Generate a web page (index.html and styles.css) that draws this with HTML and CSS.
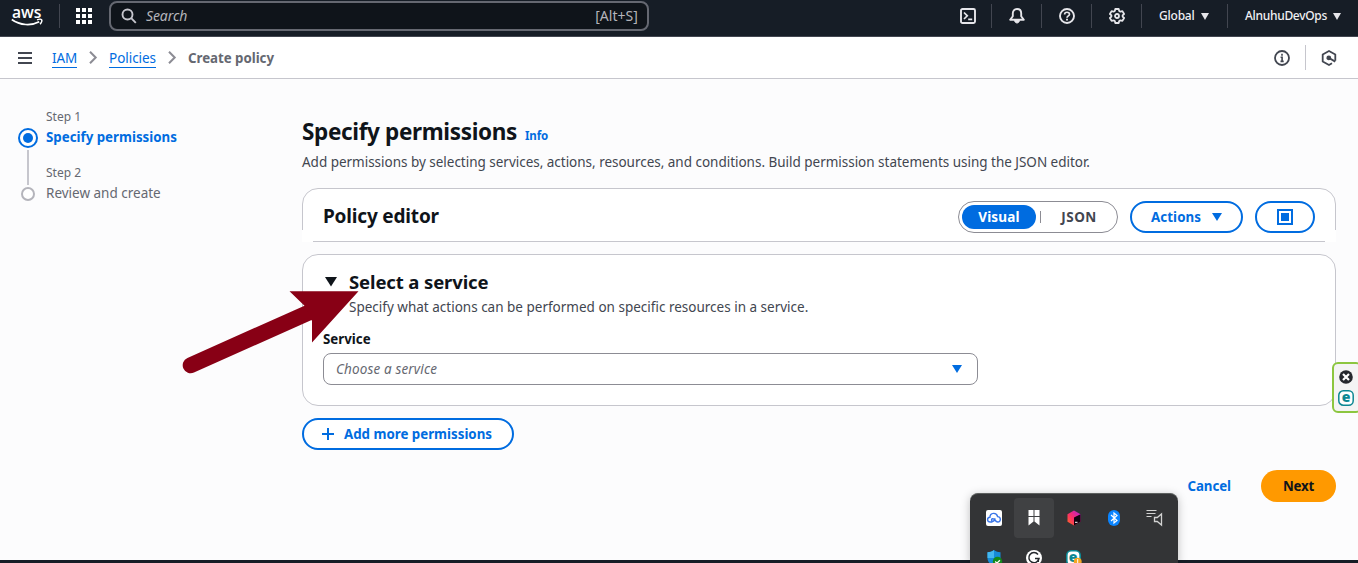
FILE: index.html
```html
<!DOCTYPE html>
<html lang="en">
<head>
<meta charset="utf-8">
<title>Create policy | IAM | Global</title>
<link rel="stylesheet" href="styles.css">
</head>
<body>
<header class="topnav">
  <div class="logo-cell">
    <svg class="logo" width="34" height="24" viewBox="0 0 34 24"><text class="logo-text" x="1" y="13.500" textLength="29.5" lengthAdjust="spacingAndGlyphs">aws</text><path d="M.8 15.5C9 21.6 20.500 22 28.200 17.800" fill="none" stroke="#fff" stroke-width="1.700"/><path d="M26 15.900c1.800-.7 4-.8 4.600-.2.500.7-.2 3-1.500 4.500" fill="none" stroke="#fff" stroke-width="1.400"/></svg>
  </div>
  <div class="apps-cell">
    <svg width="16" height="16" viewBox="0 0 16 16" fill="#fff"><path d="M0 0h4v4H0zM6 0h4v4H6zM12 0h4v4h-4zM0 6h4v4H0zM6 6h4v4H6zM12 6h4v4h-4zM0 12h4v4H0zM6 12h4v4H6zM12 12h4v4h-4z"/></svg>
  </div>
  <div class="search">
    <svg width="16" height="16" viewBox="0 0 16 16" fill="none" stroke="#c6c6cd" stroke-width="1.900"><circle cx="6.500" cy="6.500" r="5"/><path d="m10.200 10.200 4.600 4.600"/></svg>
    <span class="search-hint">Search</span>
    <span class="search-key">[Alt+S]</span>
  </div>
  <div class="tools">
    <div class="tool terminal"><svg width="16" height="16" viewBox="0 0 16 16" fill="none" stroke="#e6e6ea" stroke-width="1.900"><rect x="1" y="1" width="14" height="14" rx="1.500"/><path d="m4 4.500 3.300 3.300L4 11M8.200 11.300h4" stroke-width="1.700"/></svg></div>
    <div class="tool ruled"><svg width="16" height="16" viewBox="0 0 16 16" fill="none" stroke="#e6e6ea" stroke-width="1.900" stroke-linejoin="round"><path d="M8 1C5.200 1 3.800 3 3.800 5.300v2.900L1.200 11.700h13.600l-2.600-3.500V5.300C12.200 3 10.800 1 8 1z"/><path d="M5.500 12.500c.4 3.300 4.600 3.300 5 0z" fill="#e6e6ea" stroke-width="1"/></svg></div>
    <div class="tool ruled"><svg width="16" height="16" viewBox="0 0 16 16" fill="none" stroke="#e6e6ea" stroke-width="1.900"><circle cx="8" cy="8" r="7"/><path d="M5.600 6.400C5.600 3.500 10.500 3.600 10.500 6.200c0 1.600-2.500 1.700-2.500 3.500" stroke-width="1.700"/><path d="M8 10.800v1.800"/></svg></div>
    <div class="tool ruled"><svg width="16" height="16" viewBox="0 0 16 16" fill="none" stroke="#e6e6ea" stroke-width="1.800" stroke-linejoin="round"><path d="M6.300 1h3.400l.5 2 1.200.7 2-.6 1.700 2.900L13.600 7.400v1.200l1.500 1.400-1.700 2.900-2-.6-1.200.7-.5 2H6.300l-.5-2-1.200-.7-2 .6L.9 10l1.500-1.400V7.400L.9 6l1.700-2.900 2 .6L5.800 3z"/><circle cx="8" cy="8" r="2"/></svg></div>
    <div class="tool ruled region"><span class="region-name">Global</span><svg class="caret" width="8" height="7" viewBox="0 0 8 7"><path d="M0 0h8L4 7z" fill="#e6e6ea"/></svg></div>
    <div class="tool ruled account"><span class="account-name">AlnuhuDevOps</span><svg class="caret" width="8" height="7" viewBox="0 0 8 7"><path d="M0 0h8L4 7z" fill="#e6e6ea"/></svg></div>
  </div>
</header>

<nav class="crumbs">
  <svg class="menu" width="14" height="12" viewBox="0 0 14 12" fill="#424650"><path d="M0 0h14v2H0zM0 5h14v2H0zM0 10h14v2H0z"/></svg>
  <a class="crumb crumb-iam">IAM</a>
  <svg class="chev" width="8" height="13" viewBox="0 0 8 13" fill="none" stroke="#8c8c94" stroke-width="2"><path d="m1 .7 5.700 5.800L1 12.300"/></svg>
  <a class="crumb crumb-policies">Policies</a>
  <svg class="chev" width="8" height="13" viewBox="0 0 8 13" fill="none" stroke="#8c8c94" stroke-width="2"><path d="m1 .7 5.700 5.800L1 12.300"/></svg>
  <span class="crumb-current">Create policy</span>
  <div class="crumb-tools">
    <svg width="16" height="16" viewBox="0 0 16 16" fill="none" stroke="#424650" stroke-width="1.800"><circle cx="8" cy="8" r="7"/><path d="M8 3.800v1.900M6.600 7.300h1.500v4.300M6.500 11.400h3.200" stroke-width="1.600"/></svg>
    <i class="rule"></i>
    <svg width="16" height="16" viewBox="0 0 16 16" fill="none" stroke="#424650" stroke-width="1.800" stroke-linejoin="round"><path d="M14.300 10.800V4.500L8 1 1.700 4.500v7L8 15l3-1.700"/><path d="m8 8 6.300 3.700" stroke-width="2"/><circle cx="7.800" cy="7.900" r="1.500" fill="#424650"/></svg>
  </div>
</nav>

<div class="layout">
  <aside class="steps">
    <div class="rail">
      <svg width="20" height="20" viewBox="0 0 20 20"><circle cx="10" cy="10" r="9" fill="#fff" stroke="#006ce0" stroke-width="2"/><circle cx="10" cy="10" r="5" fill="#006ce0"/></svg>
      <i class="rail-line"></i>
      <svg width="14" height="14" viewBox="0 0 14 14"><circle cx="7" cy="7" r="6" fill="#fff" stroke="#b4b4bb" stroke-width="2"/></svg>
    </div>
    <div class="step-list">
      <div class="step"><div class="step-no">Step 1</div><div class="step-name active">Specify permissions</div></div>
      <div class="step"><div class="step-no">Step 2</div><div class="step-name">Review and create</div></div>
    </div>
  </aside>

  <main class="content">
    <div class="title-row"><h1 class="title">Specify permissions</h1><a class="info">Info</a></div>
    <p class="lead">Add permissions by selecting services, actions, resources, and conditions. Build permission statements using the JSON editor.</p>

    <section class="editor">
      <h2 class="editor-title">Policy editor</h2>
      <div class="segmented"><span class="segment selected">Visual</span><i class="segment-rule"></i><span class="segment json">JSON</span></div>
      <button class="button actions"><span class="actions-label">Actions</span><svg width="10" height="8" viewBox="0 0 10 8"><path d="M0 0h10L5 8z" fill="#006ce0"/></svg></button>
      <button class="button panel-button"><svg width="16" height="16" viewBox="0 0 16 16"><path d="M1 1h14v14H1z" fill="none" stroke="#006ce0" stroke-width="2"/><path d="M4 4h8v8H4z" fill="#006ce0"/></svg></button>
    </section>

    <section class="service">
      <div class="service-head">
        <svg width="12" height="10" viewBox="0 0 12 10"><path d="M0 0h12L6 9.500z" fill="#0f141a"/></svg>
        <h2 class="service-title">Select a service</h2>
      </div>
      <p class="service-lead">Specify what actions can be performed on specific resources in a service.</p>
      <div class="field-label">Service</div>
      <div class="select"><span class="placeholder">Choose a service</span><svg width="10" height="8" viewBox="0 0 10 8"><path d="M0 0h10L5 8z" fill="#006ce0"/></svg></div>
    </section>

    <button class="button add"><svg width="12" height="12" viewBox="0 0 12 12"><path d="M6 0v12M0 6h12" stroke="#006ce0" stroke-width="2"/></svg><span class="add-label">Add more permissions</span></button>

    <div class="footer-actions"><a class="cancel">Cancel</a><button class="next"><span>Next</span></button></div>
  </main>
</div>
<footer class="bottom-bar"></footer>

<svg class="arrow" width="180" height="90" viewBox="0 0 180 90"><path d="M10.700 75.200 130 22" stroke="#880015" stroke-width="16" stroke-linecap="round"/><path d="M109.500 1.200H178.500L132 52.500V31L124.500 15.800z" fill="#880015"/></svg>

<div class="dock">
  <svg width="14" height="14" viewBox="0 0 14 14"><circle cx="7" cy="7" r="6.800" fill="#25282d"/><path d="m4 4 6 6M10 4l-6 6" stroke="#fff" stroke-width="2.200"/></svg>
  <svg width="16" height="16" viewBox="0 0 16 16"><rect x=".8" y=".8" width="14.400" height="14.400" rx="4.500" fill="#fff" stroke="#0b8793" stroke-width="1.500"/><text class="eset" x="8" y="12">e</text></svg>
</div>

<div class="tray">
  <div class="tray-cell"><svg width="16" height="16" viewBox="0 0 16 16"><rect width="16" height="16" rx="2" fill="#fff"/><path d="M6.500 12H4.300C.8 12 .7 7.500 3.900 7.300 4 2.500 10.500 2 11.600 6.600c3.600.1 3.700 5.400.1 5.400-2.600 0-2.800-3.500-5-3.200-1.700.2-1.600 2.400 0 2.500 1.500.1 1.700-1.700 2.700-2.700" fill="none" stroke="#3975e8" stroke-width="1.400"/></svg></div>
  <div class="tray-cell hovered"><svg width="12" height="16" viewBox="0 0 12 16" fill="#fff"><path d="M.5 0h5v6h-5zM6.500 0h5v6h-5zM.5 7h5v4.500l-5 4zM6.500 7h5v8.500l-5-4z"/></svg></div>
  <div class="tray-cell"><svg width="16" height="16" viewBox="0 0 16 16"><defs><linearGradient id="cube" x1="0" y1="1" x2="1" y2="0"><stop offset="0" stop-color="#ff6b20"/><stop offset=".45" stop-color="#fa2d69"/><stop offset="1" stop-color="#b51fd6"/></linearGradient></defs><path d="m8 .5 6.500 3.700v7.600L8 15.500l-6.500-3.700V4.200z" fill="url(#cube)"/><path d="m8 7.500 6.500-3.300v7.600L8 15.500z" fill="#12020f"/><path d="M9 12.300h2.500" stroke="#fff"/></svg></div>
  <div class="tray-cell"><svg width="12" height="16" viewBox="0 0 12 16"><rect width="12" height="16" rx="6" fill="#0a84ff"/><path d="m3 5 6 5.500L6 13V3l3 2.500L3 11" fill="none" stroke="#fff" stroke-width="1.200"/></svg></div>
  <div class="tray-cell"><svg width="17" height="16" viewBox="0 0 17 16" fill="none" stroke="#d2d2d2"><path d="M.5 .5h10M.5 3.500h9M.5 6.500h5"/><path d="M8.500 7.500h2.800l4.200-3.500v11l-4.200-3.500H8.500z" stroke-width="1.300"/></svg></div>
  <div class="tray-cell"><svg width="16" height="16" viewBox="0 0 16 16"><path d="M8 0c2 1.600 4 2.200 6.500 2.200V8c0 4-3 6.500-6.500 8-3.500-1.500-6.500-4-6.500-8V2.200C4 2.200 6 1.600 8 0z" fill="#168bd8"/><path d="M8 0v8H1.500V2.200C4 2.200 6 1.600 8 0z" fill="#43b7f0"/><circle cx="11.500" cy="11.500" r="4.700" fill="#138a1a"/><path d="m9.200 11.500 1.700 1.700 3-3" stroke="#fff" stroke-width="1.300" fill="none"/></svg></div>
  <div class="tray-cell"><svg width="16" height="16" viewBox="0 0 16 16"><circle cx="8" cy="8" r="8" fill="#fff"/><path d="M12 4.500A5.100 5.100 0 1 0 13 8.500H9M12.300 8.500v3.500" fill="none" stroke="#25282d" stroke-width="1.500"/></svg></div>
  <div class="tray-cell"><svg width="16" height="16" viewBox="0 0 16 16"><rect x=".8" y=".8" width="13.400" height="14.400" rx="4.500" fill="#fff" stroke="#0b8793" stroke-width="1.600"/><text class="eset" x="7" y="11.500">e</text><circle cx="11.700" cy="11.700" r="4" fill="#f5a623"/><path d="M11.700 9v5" stroke="#fff"/></svg></div>
</div>
</body>
</html>
```
FILE: styles.css
```css
* { box-sizing: border-box; }
body {
  margin: 0;
  height: 563px;
  overflow: hidden;
  display: flex;
  flex-direction: column;
  background: #fcfcfd;
  color: #0f141a;
  font: 13.5px/20px "Noto Sans", "Open Sans", sans-serif;
}
h1, h2, p { margin: 0; }
svg { display: block; flex: none; overflow: visible; }
button { font: inherit; cursor: pointer; }

.topnav {
  flex: none;
  display: flex;
  height: 37px;
  background: #161d26;
  border-bottom: 1px solid #424650;
  padding-bottom: 4px;
  align-items: center;
}
.logo-cell { width: 60px; height: 24px; padding-left: 11px; border-right: 1px solid #424650; }
.logo-text { font: 600 17px "Open Sans", sans-serif; fill: #fff; }
.apps-cell { width: 49px; padding-left: 16px; }
.search {
  display: flex;
  align-items: center;
  width: 540px;
  height: 30px;
  margin-top: -1px;
  padding: 0 9px 0 10px;
  border: 2px solid #656871;
  border-radius: 8px;
  background: #0f141a;
  color: #b4b4bb;
  font-size: 14px;
}
.search-hint { margin-left: 9px; font-style: italic; letter-spacing: -.1px; }
.search-key { margin-left: auto; letter-spacing: .05px; }
.tools { display: flex; margin-left: auto; }
.tool { display: flex; align-items: center; justify-content: center; width: 50px; height: 24px; color: #f0f0f3; font-size: 12px; font-weight: 500; }
.terminal { padding-left: 3px; }
.ruled { border-left: 1px solid #424650; }
.region { width: 86px; justify-content: flex-start; padding-left: 17px; letter-spacing: -.22px; }
.account { width: 131px; justify-content: flex-start; padding-left: 17px; letter-spacing: -.3px; }
.region-name { width: 42px; }
.account-name { width: 88px; }

.crumbs {
  flex: none;
  display: flex;
  align-items: center;
  height: 42px;
  padding: 0 21px 0 18px;
  background: #fff;
  border-bottom: 1px solid #c6c6cd;
}
.menu { margin-right: 20px; }
.crumb { color: #006ce0; height: 20px; border-bottom: 1px solid #006ce0; line-height: 20px; }
.crumb-iam { width: 25px; letter-spacing: -.15px; }
.crumb-policies { width: 47px; letter-spacing: -.04px; }
.chev { margin: 0 12px; }
.crumb-current { color: #656871; font-size: 13.3px; font-weight: 700; letter-spacing: -.03px; }
.crumb-tools { display: flex; align-items: center; margin-left: auto; }
.rule { width: 1px; height: 25px; margin: 0 15px; background: #c6c6cd; }

.layout { flex: 1; display: flex; min-height: 0; }
.steps { display: flex; width: 302px; padding: 28px 0 0 18px; }
.rail { display: flex; flex-direction: column; align-items: center; width: 20px; margin: 21px 8px 0 0; }
.rail-line { width: 2px; height: 35px; margin: 2px 0; background: #c6c6cd; }
.step { height: 56px; color: #656871; }
.step-no { font-size: 12px; }
.step-name.active { color: #006ce0; font-size: 13.3px; font-weight: 700; }

.content { display: flex; flex-direction: column; width: 1034px; padding-top: 38px; }
.title-row { display: flex; align-items: baseline; height: 30px; }
.title { width: 223px; font-size: 22.5px; line-height: 30px; font-weight: 700; letter-spacing: -.34px; white-space: nowrap; }
.info { color: #006ce0; font-size: 11.5px; font-weight: 700; letter-spacing: -.1px; }
.lead { margin-top: 5px; color: #424650; letter-spacing: -.019px; white-space: nowrap; }

.editor {
  position: relative;
  display: flex;
  align-items: center;
  height: 54px;
  margin-top: 16px;
  padding: 4px 20px 0;
  background: #fff;
  border: 1px solid #c6c6cd;
  border-radius: 16px 16px 0 0;
}
/* side borders stop short of the bottom edge */
.editor::before, .editor::after {
  content: "";
  position: absolute;
  bottom: -1px;
  width: 11px;
  height: 12px;
  background: #fff;
}
.editor::before { left: -1px; }
.editor::after { right: -1px; }
.editor-title { margin: -2px auto 0 0; font-size: 19px; line-height: 24px; letter-spacing: -.18px; }
.segmented {
  display: flex;
  align-items: center;
  width: 160px;
  height: 32px;
  padding: 0 3px;
  border: 1px solid #8c8c94;
  border-radius: 16px;
  font-weight: 700;
  color: #424650;
}
.segment { text-align: center; }
.segment.selected { width: 74px; height: 24px; line-height: 24px; border-radius: 12px; background: #006ce0; color: #fff; letter-spacing: .2px; }
.segment-rule { width: 1px; height: 12px; margin-left: 4px; background: #8c8c94; }
.json { flex: 1; padding-left: 3px; letter-spacing: .5px; }
.button {
  display: flex;
  align-items: center;
  justify-content: center;
  height: 32px;
  padding: 0;
  border: 2px solid #006ce0;
  border-radius: 16px;
  background: #fff;
  color: #006ce0;
  font-size: 13.3px;
  font-weight: 700;
}
.actions { width: 113px; margin: 0 12px; gap: 11px; letter-spacing: .08px; }
.panel-button { width: 60px; }

.service {
  height: 152px;
  margin-top: 12px;
  padding: 14px 20px 0;
  background: #fff;
  border: 1px solid #c6c6cd;
  border-radius: 16px;
}
.service-head { display: flex; align-items: center; gap: 12px; height: 25px; padding-left: 2px; }
.service-title { font-size: 18.5px; line-height: 24px; letter-spacing: -.12px; }
.service-lead { margin: 3px 0 0 26px; color: #424650; }
.field-label { margin-top: 12px; font-size: 13.3px; font-weight: 700; }
.select {
  display: flex;
  align-items: center;
  justify-content: space-between;
  width: 655px;
  height: 32px;
  margin-top: 4px;
  padding: 0 15px 0 12px;
  border: 1px solid #8c8c94;
  border-radius: 8px;
  color: #656871;
}
.placeholder { font-style: italic; letter-spacing: .14px; }
.add { width: 212px; margin-top: 12px; padding-right: 2px; gap: 10px; }
.footer-actions { display: flex; justify-content: flex-end; align-items: center; gap: 30px; margin-top: 20px; font-size: 13.3px; font-weight: 700; }
.cancel { color: #006ce0; letter-spacing: -.07px; }
.next { width: 75px; height: 32px; padding: 0; border: 0; border-radius: 16px; background: #ff9900; color: #0f141a; font-weight: 700; letter-spacing: -.2px; }
.bottom-bar { flex: none; height: 3px; background: #161d26; }

.arrow { position: absolute; left: 180px; top: 290px; }
.dock {
  position: absolute;
  left: 1332px;
  top: 362px;
  display: flex;
  flex-direction: column;
  align-items: center;
  gap: 6px;
  width: 30px;
  height: 51px;
  padding: 6px 2px 0 0;
  border: 2px solid #8cc63f;
  border-radius: 6px;
  background: #f4f4f4;
}
.eset { font: 800 14px "Open Sans", sans-serif; fill: #0b8793; text-anchor: middle; }
.tray {
  position: absolute;
  left: 970px;
  top: 493px;
  display: grid;
  grid-template-columns: repeat(5, 40px);
  grid-auto-rows: 40px;
  width: 208px;
  height: 70px;
  padding: 4px 4px 0;
  border-top: 1px solid #5d605f;
  border-radius: 8px 8px 0 0;
  background: #333436;
  box-shadow: 0 2px 10px rgba(0, 0, 0, .25);
}
.tray-cell { display: flex; align-items: center; justify-content: center; border-radius: 4px; }
.hovered { background: #404143; }
```
